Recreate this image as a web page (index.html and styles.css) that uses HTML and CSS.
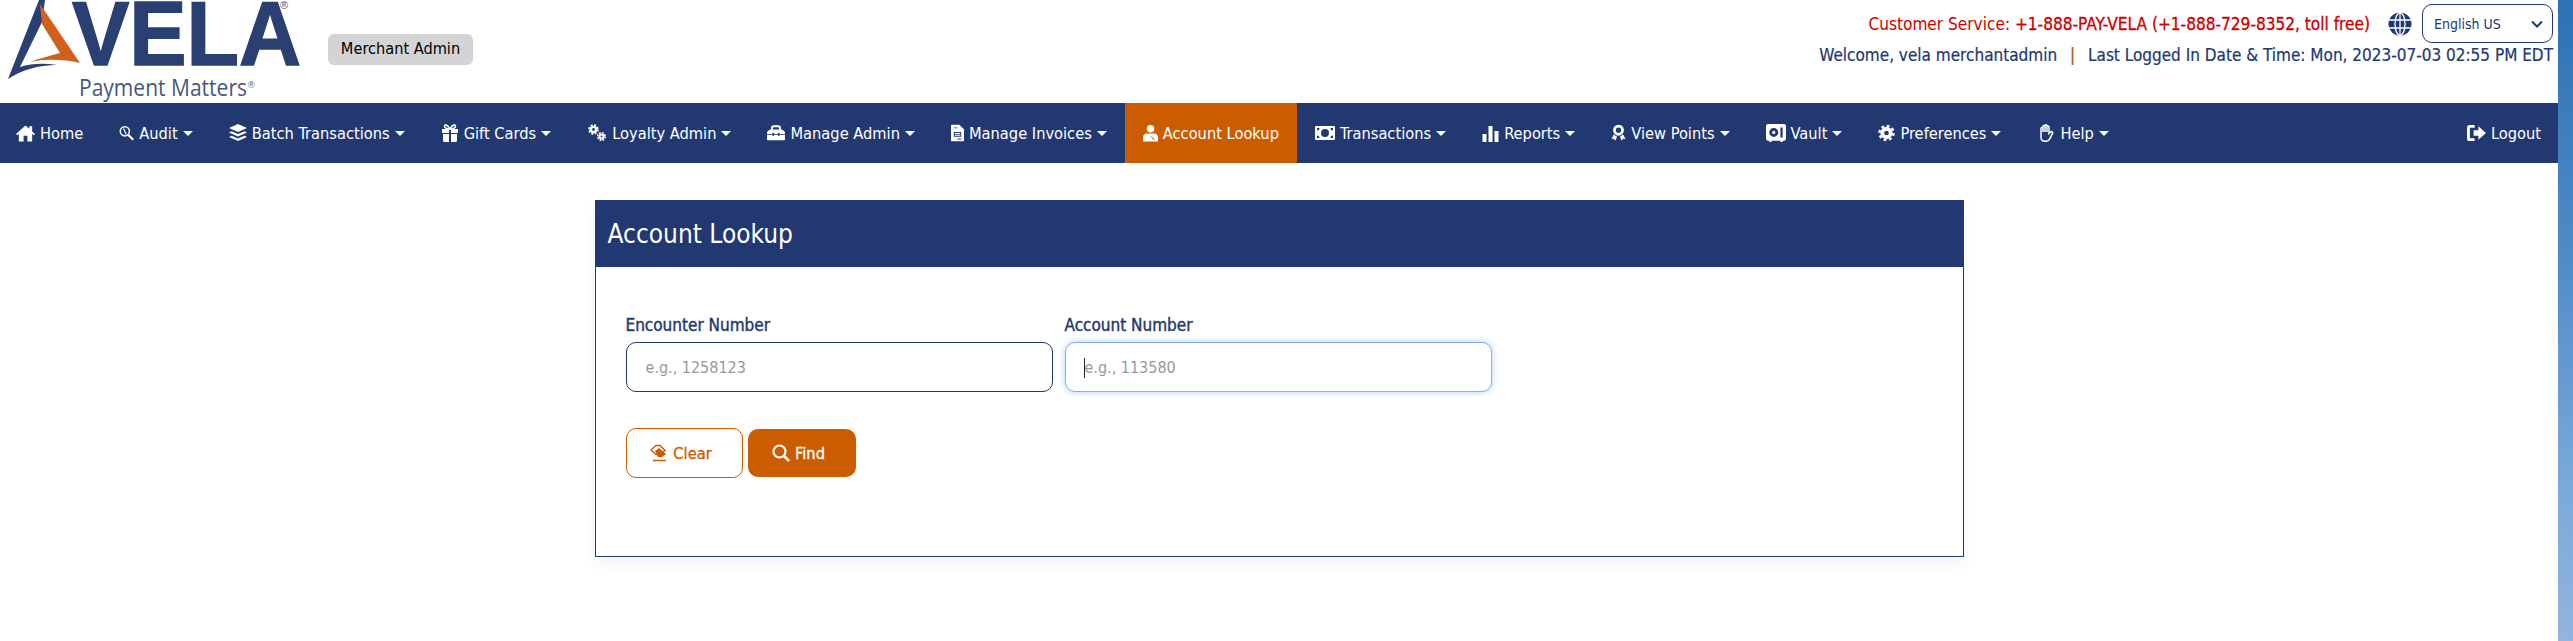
FILE: index.html
```html
<!DOCTYPE html>
<html lang="en">
<head>
    <meta charset="UTF-8">
    <title>Account Lookup</title>
    <link rel="stylesheet" href="styles.css">
</head>
<body>
    <div class="page">
        <header class="topbar">
            <div class="brand">
                <svg class="logo" viewBox="0 0 310 103" width="310" height="103" role="img" aria-label="Vela">
                    <path fill="#2a3f72" d="M39 0 L45 0 L42 22 L20 67 C32 63 45 63 57 65 C38 65 22 70 8 79 Z"/>
                    <path fill="#d0601c" d="M40 4 L80 63 C62 59 45 59 30 62 C40 58 50 56 60 53 L42 24 Z"/>
                    <text class="logo-word" x="72" y="65" textLength="229" lengthAdjust="spacingAndGlyphs">VELA</text>
                    <text class="logo-reg" x="280" y="9">®</text>
                    <text class="logo-tag" x="79" y="96" textLength="168" lengthAdjust="spacingAndGlyphs">Payment Matters</text>
                    <text class="logo-reg small" x="248" y="88">®</text>
                </svg>
                <span class="role-badge">Merchant Admin</span>
            </div>
            <div class="topbar-right">
                <div class="service-row">
                    <span class="service">Customer Service: <b>+1-888-PAY-VELA (+1-888-729-8352, toll free)</b></span>
                    <svg class="globe" viewBox="0 0 24 24" width="24" height="24">
                        <circle cx="12" cy="12" r="11.5" fill="#223870"/>
                        <g fill="none" stroke="#fff" stroke-width="1.3">
                            <ellipse cx="12" cy="12" rx="5" ry="11.5"/>
                            <path d="M1 8h22M1 16h22M12 0v24"/>
                        </g>
                    </svg>
                    <div class="lang-select">
                        <span>English US</span>
                        <svg viewBox="0 0 12 8" width="12" height="8"><path d="M1 1.5l5 5 5-5" fill="none" stroke="#223870" stroke-width="2"/></svg>
                    </div>
                </div>
                <div class="welcome">Welcome, vela merchantadmin <span class="sep">|</span> Last Logged In Date &amp; Time: Mon, 2023-07-03 02:55 PM EDT</div>
            </div>
        </header>

        <nav class="navbar">
            <a class="nav-item first">
                <svg class="ico" width="19" viewBox="0 0 20 18"><path d="M10 1L0 10l1.2 1.3L3 9.800V18h5v-6h4v6h5V9.800l1.800 1.500L20 10l-3-2.700V2h-3v2.600z"/></svg>
                Home
            </a>
            <a class="nav-item caret">
                <svg class="ico" width="15" viewBox="0 0 18 18"><g fill="none" stroke="#fff"><circle cx="7" cy="7" r="5.500" stroke-width="1.800"/><path d="M11 11l6 6" stroke-width="2.600"/><path d="M5.500 3.500l3 7" stroke-width="1.400"/></g></svg>
                Audit
            </a>
            <a class="nav-item caret">
                <svg class="ico" width="18" viewBox="0 0 18 18"><path d="M9 0l9 4-9 4-9-4z"/><path d="M2.500 7.200L9 10l6.500-2.800L18 8.500l-9 4-9-4z"/><path d="M2.500 11.700L9 14.500l6.500-2.800 2.500 1.300-9 4-9-4z"/></svg>
                Batch Transactions
            </a>
            <a class="nav-item caret">
                <svg class="ico" width="18" viewBox="0 0 18 18"><path d="M1 5h7v4H1zM10 5h7v4h-7zM2 10h6v8H3.500A1.500 1.500 0 0 1 2 16.500zM10 10h6v6.500a1.500 1.500 0 0 1-1.500 1.500H10z"/><path d="M9 5C7 1 4 0 3.500 2S6 5 9 5c3 0 6-1 5.500-3S11 1 9 5z" fill="none" stroke="#fff" stroke-width="1.500"/></svg>
                Gift Cards
            </a>
            <a class="nav-item caret">
                <svg class="ico" width="20" viewBox="0 0 20 18"><g fill="none" stroke="#fff"><circle cx="6.500" cy="5.500" r="2.600" stroke-width="2.400"/><circle cx="6.500" cy="5.500" r="4.400" stroke-width="1.800" stroke-dasharray="2 1.460"/><circle cx="14.500" cy="12.500" r="2" stroke-width="2.200"/><circle cx="14.500" cy="12.500" r="3.800" stroke-width="1.600" stroke-dasharray="1.800 1.180"/></g></svg>
                Loyalty Admin
            </a>
            <a class="nav-item caret">
                <svg class="ico" width="18" viewBox="0 0 20 18"><path d="M5.500 6V3.500A2 2 0 0 1 7.500 1.500h5a2 2 0 0 1 2 2V6" fill="none" stroke="#fff" stroke-width="2"/><path d="M3 5h14l3 3v2h-6V9h-2v1H8V9H6v1H0V8zM0 11h6v1h2v-1h4v1h2v-1h6v5a1 1 0 0 1-1 1H1a1 1 0 0 1-1-1z"/></svg>
                Manage Admin
            </a>
            <a class="nav-item caret">
                <svg class="ico" width="13" viewBox="0 0 14 18"><path fill-rule="evenodd" d="M1 0h8l5 5v12a1 1 0 0 1-1 1H1a1 1 0 0 1-1-1V1a1 1 0 0 1 1-1zM3 3v1h4V3zM3 8v5h8V8zM4 9h6v1H4zM4 11h6v1H4zM7 15v1h4v-1z"/></svg>
                Manage Invoices
            </a>
            <a class="nav-item active">
                <svg class="ico" width="15" viewBox="0 0 16 18"><circle cx="8" cy="4.500" r="4"/><path fill-rule="evenodd" d="M4 9.500h8c2.500 0 4 2 4 4V18H0v-4.500c0-2 1.500-4 4-4zM7 11l4 5h2z"/></svg>
                Account Lookup
            </a>
            <a class="nav-item caret">
                <svg class="ico" width="20" viewBox="0 0 20 14"><path fill-rule="evenodd" d="M1 0h18a1 1 0 0 1 1 1v12a1 1 0 0 1-1 1H1a1 1 0 0 1-1-1V1a1 1 0 0 1 1-1zM10 3a4 4 0 1 0 0 8 4 4 0 0 0 0-8zM2 2v2.500A2.500 2.500 0 0 0 4.500 2zM2 12h2.500A2.500 2.500 0 0 0 2 9.500zM18 2h-2.500A2.500 2.500 0 0 0 18 4.500zM18 12V9.500a2.500 2.500 0 0 0-2.500 2.500z"/></svg>
                Transactions
            </a>
            <a class="nav-item caret">
                <svg class="ico" width="17" viewBox="0 0 16 18"><path d="M0 10h4v8H0zM6 2h4v16H6zM12 7h4v11h-4z"/></svg>
                Reports
            </a>
            <a class="nav-item caret">
                <svg class="ico" width="15" viewBox="0 0 16 18"><circle cx="8" cy="6" r="4.300" fill="none" stroke="#fff" stroke-width="3"/><path d="M3 10.500l-2.500 5 2.500-.3 1.500 2 2-4.200zM13 10.500l2.500 5-2.500-.3-1.500 2-2-4.200z"/></svg>
                View Points
            </a>
            <a class="nav-item caret">
                <svg class="ico" width="20" viewBox="0 1 18 16"><path fill-rule="evenodd" d="M2 1h14a2 2 0 0 1 2 2v11a2 2 0 0 1-2 2h-1v1h-2v-1H5v1H3v-1H2a2 2 0 0 1-2-2V3a2 2 0 0 1 2-2zM7 4.500a4 4 0 1 0 0 8 4 4 0 0 0 0-8zM7 7a1.500 1.500 0 1 1 0 3 1.500 1.500 0 0 1 0-3zM13 4v9h2V4z"/></svg>
                Vault
            </a>
            <a class="nav-item caret">
                <svg class="ico" width="17" viewBox="0 0 18 18"><g fill="none" stroke="#fff"><circle cx="9" cy="9" r="4.500" stroke-width="4"/><circle cx="9" cy="9" r="7.500" stroke-width="2.500" stroke-dasharray="3 2.890"/></g></svg>
                Preferences
            </a>
            <a class="nav-item caret">
                <svg class="ico" width="18" viewBox="0 0 16 18"><path d="M3 9V4.500a1 1 0 0 1 2 0V8 2.500a1 1 0 0 1 2 0V8 1.800a1 1 0 0 1 2 0V8 3a1 1 0 0 1 2 0v6.500L12.500 8a1.200 1.200 0 0 1 2 1.300l-2.500 5c-1 2-2 3-4 3H7c-2.500 0-4-1.500-4-4z" fill="none" stroke="#fff" stroke-width="1.500"/></svg>
                Help
            </a>
            <a class="nav-item logout">
                <svg class="ico" width="19" viewBox="0 0 20 18"><path d="M8 2H3a1.500 1.500 0 0 0-1.500 1.500v11A1.500 1.500 0 0 0 3 16h5" fill="none" stroke="#fff" stroke-width="3"/><path d="M7 6h5V2l8 7-8 7v-4H7z"/></svg>
                Logout
            </a>
        </nav>

        <main class="content">
            <section class="card">
                <h1 class="card-title">Account Lookup</h1>
                <form class="card-body">
                    <div class="fields">
                        <div class="field">
                            <label for="encounter">Encounter Number</label>
                            <input type="text" id="encounter" placeholder="e.g., 1258123">
                        </div>
                        <div class="field">
                            <label for="account">Account Number</label>
                            <div class="input-wrap">
                                <input class="focused" type="text" id="account" placeholder="e.g., 113580">
                                <span class="text-caret"></span>
                            </div>
                        </div>
                    </div>
                    <div class="actions">
                        <button class="btn btn-outline" type="button">
                            <svg class="btn-ico" viewBox="0 0 18 18"><path d="M6 1.500L1 6l5 4.500h3.500L15 6.500 10 1.500z" fill="none" stroke="#cc5c00" stroke-width="1.500"/><path d="M5 7l4-3 7 6-4 3H8z" fill="#cc5c00"/><path d="M3 16.500h13" stroke="#cc5c00" stroke-width="1.500"/></svg>
                            Clear
                        </button>
                        <button class="btn btn-solid" type="button">
                            <svg class="btn-ico" viewBox="0 0 18 18"><circle cx="7.500" cy="7.500" r="6" fill="none" stroke="#fff" stroke-width="2.200"/><path d="M12 12l5 5" stroke="#fff" stroke-width="2.600"/></svg>
                            Find
                        </button>
                    </div>
                </form>
            </section>
        </main>
    </div>
    <div class="desktop-edge"></div>
</body>
</html>
```

FILE: styles.css
```css
:root {
    --navy: #223870;
    --orange: #cc5c00;
}

* {
    box-sizing: border-box;
    margin: 0;
    padding: 0;
}

html, body {
    height: 100%;
}

body {
    display: flex;
    overflow: hidden;
    font-family: "DejaVu Sans Condensed", "DejaVu Sans", sans-serif;
    font-size: 16px;
    color: var(--navy);
    background: #fff;
}

.page {
    flex: 1;
    min-width: 0;
}

.desktop-edge {
    width: 15px;
    background: linear-gradient(to bottom, #2d72b4, #4f8bc8 40%, #79a9da 75%, #92b4dd);
}

/* top header */
.topbar {
    height: 103px;
    display: flex;
    justify-content: space-between;
    padding-right: 5px;
}

.brand {
    display: flex;
    align-items: flex-start;
}

.logo {
    display: block;
    flex: none;
    margin-right: 18px;
}

.logo-word {
    font-family: "Liberation Sans", sans-serif;
    font-weight: 700;
    font-size: 90px;
    fill: #2a3f72;
    stroke: #2a3f72;
    stroke-width: 1.5px;
}

.logo-tag {
    font-family: "Open Sans", sans-serif;
    font-size: 24px;
    fill: #46587f;
}

.logo-reg {
    font-family: "Liberation Sans", sans-serif;
    font-size: 11px;
    fill: #46587f;
}

.logo-reg.small {
    font-size: 9px;
}

.role-badge {
    margin-top: 34px;
    height: 31px;
    width: 145px;
    line-height: 30px;
    text-align: center;
    background: #d4d4d4;
    border-radius: 6px;
    color: #000;
    font-size: 16.2px;
}

.topbar-right {
    display: flex;
    flex-direction: column;
    align-items: flex-end;
}

.service-row {
    display: flex;
    align-items: center;
    margin-top: 4px;
}

.service {
    color: #c00;
    font-size: 17.1px;
    margin-right: 18px;
}

.service b {
    font-weight: 400;
    -webkit-text-stroke: 0.3px #c00;
}

.globe {
    margin-right: 10px;
}

.lang-select {
    width: 131px;
    height: 39px;
    display: flex;
    align-items: center;
    justify-content: space-between;
    padding: 0 9px 0 11px;
    border: 1px solid var(--navy);
    border-radius: 10px;
    font-size: 14px;
}

.welcome {
    margin-top: 2px;
    font-size: 17px;
    line-height: 20px;
    -webkit-text-stroke: 0.2px var(--navy);
}

.sep {
    color: var(--orange);
    margin: 0 8px;
}

/* main nav */
.navbar {
    height: 60px;
    display: flex;
    align-items: stretch;
    background: var(--navy);
    color: #fff;
    font-size: 16.3px;
}

.nav-item {
    display: flex;
    align-items: center;
    gap: 5px;
    padding: 0 18px;
    white-space: nowrap;
}

.nav-item.first {
    padding-left: 16px;
}

.nav-item.caret::after {
    content: "";
    border-top: 5px solid #fff;
    border-left: 5px solid transparent;
    border-right: 5px solid transparent;
}

.nav-item.active {
    background: var(--orange);
}

.nav-item.logout {
    margin-left: auto;
    padding-right: 17px;
}

.ico {
    height: 18px;
    fill: #fff;
    flex: none;
}

/* lookup card */
.content {
    padding-top: 37px;
}

.card {
    width: 1369px;
    height: 357px;
    margin: 0 auto;
    border: 1px solid var(--navy);
    box-shadow: 0 8px 16px rgba(0, 0, 0, 0.05);
}

.card-title {
    height: 66px;
    padding-left: 12px;
    line-height: 66px;
    background: var(--navy);
    color: #fff;
    font-size: 26px;
    font-weight: 400;
}

.card-body {
    padding: 49px 30px 0;
}

.fields {
    display: flex;
    gap: 12px;
}

.field {
    width: 427px;
}

.field label {
    display: block;
    margin-bottom: 7px;
    line-height: 19px;
    font-size: 17px;
    -webkit-text-stroke: 0.4px var(--navy);
}

.field input {
    display: block;
    width: 100%;
    height: 50px;
    padding: 0 19px;
    border: 1px solid var(--navy);
    border-radius: 10px;
    font: inherit;
    font-size: 16px;
    outline: none;
}

.field input::placeholder {
    color: #999;
}

.field input.focused {
    border-color: #86b0ea;
    box-shadow: 0 0 6px rgba(80, 140, 230, 0.45);
}

.input-wrap {
    position: relative;
}

.text-caret {
    position: absolute;
    left: 19px;
    top: 16px;
    width: 1px;
    height: 20px;
    background: #222;
}

.actions {
    display: flex;
    align-items: center;
    gap: 5px;
    margin-top: 36px;
}

.btn {
    display: flex;
    align-items: center;
    justify-content: center;
    gap: 5px;
    height: 50px;
    padding-right: 6px;
    border-radius: 10px;
    font: inherit;
    font-size: 16.3px;
    -webkit-text-stroke: 0.3px currentColor;
}

.btn-outline {
    width: 117px;
    background: #fff;
    color: var(--orange);
    border: 1px solid var(--orange);
}

.btn-solid {
    width: 108px;
    height: 48px;
    background: var(--orange);
    color: #fff;
    border: none;
}

.btn-ico {
    width: 18px;
    height: 18px;
    flex: none;
}
```
